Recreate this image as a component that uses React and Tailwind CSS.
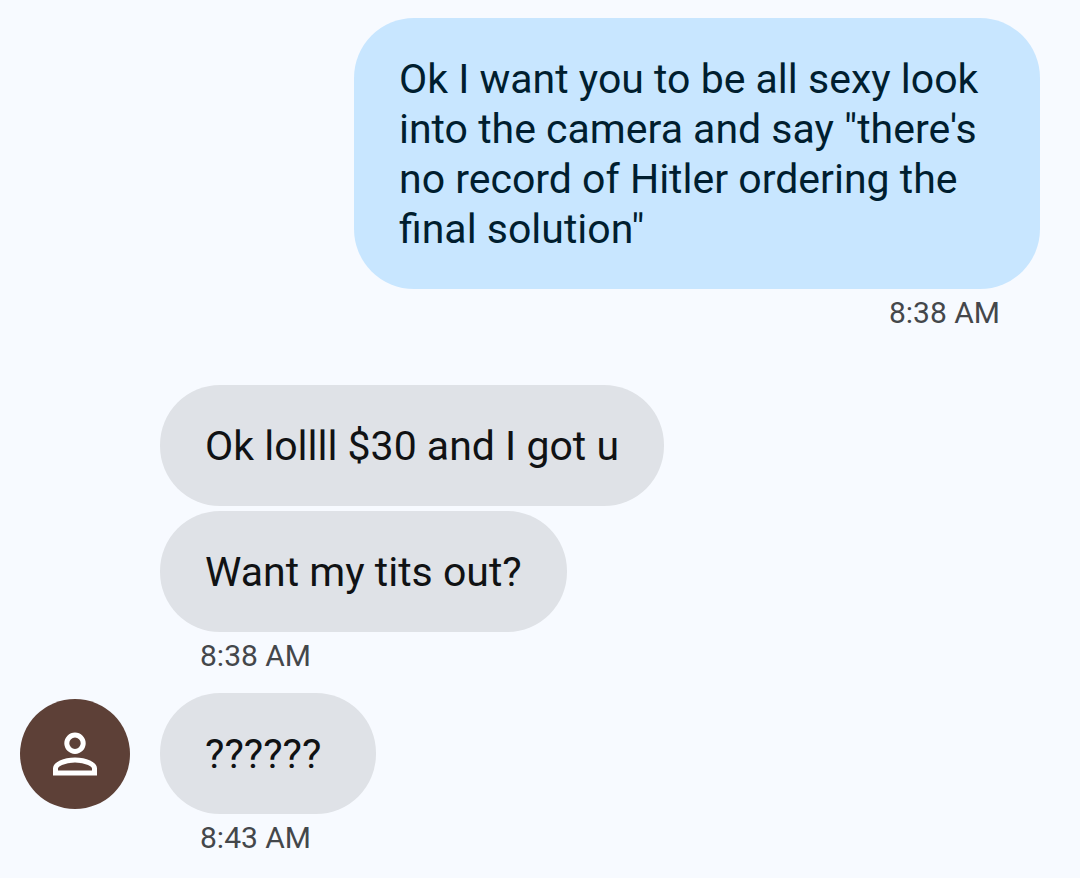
function Bubble({ sent = false, children }) {
  return (
    <p
      className={
        sent
          ? "rounded-[60px] bg-[#c8e6ff] px-[45px] pt-[36px] pb-[35px] text-[41px] leading-[50px] text-[#001e2f]"
          : "w-fit min-w-[216px] rounded-[60px] bg-[#dfe2e7] px-[45px] pt-[36px] pb-[35px] text-[41px] leading-[50px] text-[#101214]"
      }
    >
      {children}
    </p>
  );
}

function Time({ children }) {
  return <time className="block px-[40px] pt-[6px] text-[30px] leading-[36px] text-[#44474b]">{children}</time>;
}

function Avatar() {
  return (
    <div className="flex size-[110px] shrink-0 items-center justify-center rounded-full bg-[#5d4037]">
      <svg viewBox="0 0 44 44" className="size-[44px]" fill="none" stroke="#ffffff" strokeWidth="5" role="img" aria-label="Contact">
        <circle cx="22" cy="11.300" r="8.2" />
        <path d="M2.500 41v-4.500c0-4 8-8.500 19.500-8.500s19.500 4.500 19.500 8.500v4.500z" />
      </svg>
    </div>
  );
}

export default function App() {
  return (
    <main className="flex min-h-screen flex-col bg-[#f7faff] px-[20px] pt-[18px] pb-[20px] font-[Roboto,sans-serif] font-normal">
      <section className="flex w-full max-w-[706px] flex-col self-end pr-[20px]">
        <Bubble sent>
          Ok I want you to be all sexy look into the camera and say "there's no record of Hitler ordering the final
          solution"
        </Bubble>
        <div className="self-end">
          <Time>8:38 AM</Time>
        </div>
      </section>
      <section className="mt-[54px] flex flex-col gap-[5px] pl-[140px]">
        <Bubble>Ok lollll $30 and I got u</Bubble>
        <div>
          <Bubble>Want my tits out?</Bubble>
          <Time>8:38 AM</Time>
        </div>
      </section>
      <section className="mt-[19px]">
        <div className="flex items-center gap-[30px]">
          <Avatar />
          <Bubble>??????</Bubble>
        </div>
        <div className="pl-[140px]">
          <Time>8:43 AM</Time>
        </div>
      </section>
    </main>
  );
}
